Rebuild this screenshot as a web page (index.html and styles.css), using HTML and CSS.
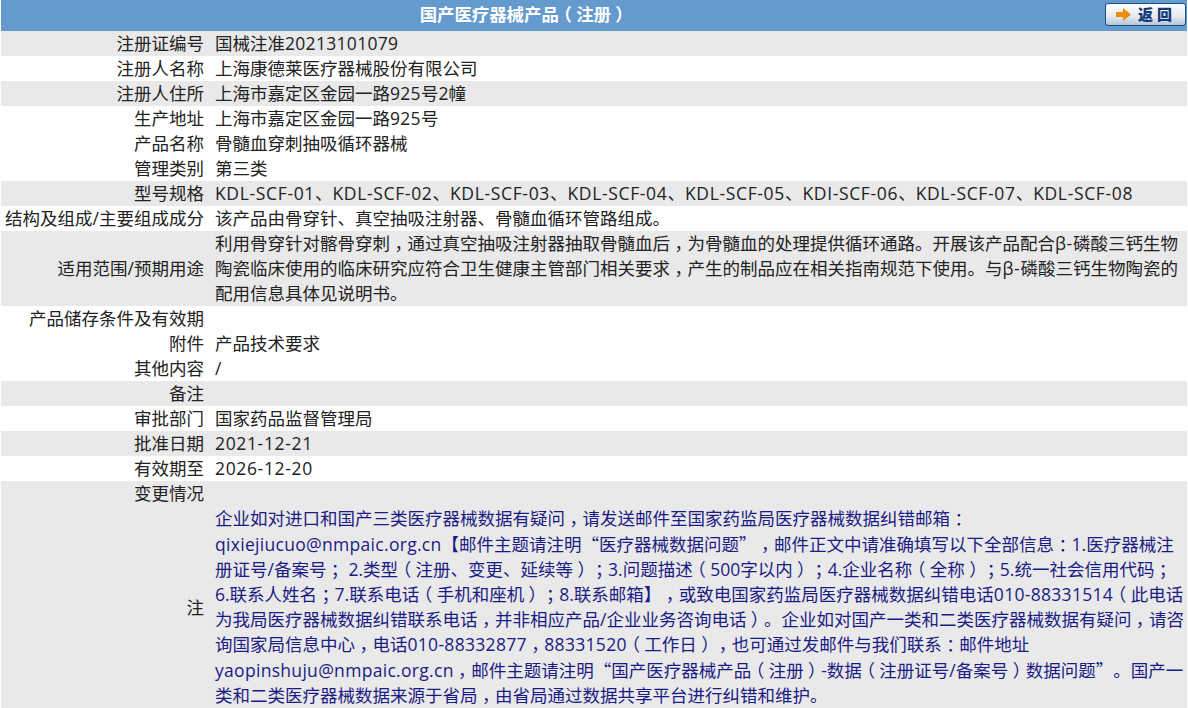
FILE: index.html
```html
<!DOCTYPE html>
<html lang="zh-CN">
<head>
<meta charset="utf-8">
<title>国产医疗器械产品（注册）</title>
<link rel="stylesheet" href="styles.css">
</head>
<body>
<main class="page">
  <header class="titlebar">
    <h1 class="title">国产医疗器械产品<span class="p">（</span>注册<span class="p">）</span></h1>
    <a class="back" href="#">
      <svg class="back-icon" width="15" height="13" viewBox="0 0 15 13"><path d="M0 4h7V0l8 6.5L7 13V9H0z" fill="#ee8a0c"/></svg>
      <span class="back-text">返回</span>
    </a>
  </header>
  <table class="detail">
    <tbody>
      <tr class="alt"><th>注册证编号</th><td>国械注准<span class="num">20213101079</span></td></tr>
      <tr><th>注册人名称</th><td>上海康德莱医疗器械股份有限公司</td></tr>
      <tr class="alt"><th>注册人住所</th><td>上海市嘉定区金园一路<span class="num">925</span>号2幢</td></tr>
      <tr><th>生产地址</th><td>上海市嘉定区金园一路<span class="num">925</span>号</td></tr>
      <tr><th>产品名称</th><td>骨髓血穿刺抽吸循环器械</td></tr>
      <tr><th>管理类别</th><td>第三类</td></tr>
      <tr class="alt"><th>型号规格</th><td><span class="code">KDL-SCF-01</span>、<span class="code">KDL-SCF-02</span>、<span class="code">KDL-SCF-03</span>、<span class="code">KDL-SCF-04</span>、<span class="code">KDL-SCF-05</span>、<span class="code">KDI-SCF-06</span>、<span class="code">KDL-SCF-07</span>、<span class="code">KDL-SCF-08</span></td></tr>
      <tr><th>结构及组成/主要组成成分</th><td>该产品由骨穿针、真空抽吸注射器、骨髓血循环管路组成。</td></tr>
      <tr class="alt"><th>适用范围/预期用途</th><td>利用骨穿针对髂骨穿刺<span class="p">，</span>通过真空抽吸注射器抽取骨髓血后<span class="p">，</span>为骨髓血的处理提供循环通路。开展该产品配合<span class="code">β-</span>磷酸三钙生物陶瓷临床使用的临床研究应符合卫生健康主管部门相关要求<span class="p">，</span>产生的制品应在相关指南规范下使用。与<span class="code">β-</span>磷酸三钙生物陶瓷的配用信息具体见说明书。</td></tr>
      <tr><th>产品储存条件及有效期</th><td></td></tr>
      <tr><th>附件</th><td>产品技术要求</td></tr>
      <tr><th>其他内容</th><td>/</td></tr>
      <tr class="alt"><th>备注</th><td></td></tr>
      <tr><th>审批部门</th><td>国家药品监督管理局</td></tr>
      <tr class="alt"><th>批准日期</th><td><span class="code">2021-12-21</span></td></tr>
      <tr><th>有效期至</th><td><span class="code">2026-12-20</span></td></tr>
      <tr class="alt"><th>变更情况</th><td></td></tr>
      <tr class="alt"><th>注</th><td class="note">企业如对进口和国产三类医疗器械数据有疑问<span class="p">，</span>请发送邮件至国家药监局医疗器械数据纠错邮箱<span class="p">：</span><br><span class="num">qixiejiucuo@nmpaic.org.cn</span>【邮件主题请注明<span class="cjk">“</span>医疗器械数据问题<span class="cjk">”</span><span class="p">，</span>邮件正文中请准确填写以下全部信息<span class="p">：</span>1.医疗器械注<br>册证号/备案号<span class="p">；</span> 2.类型<span class="p">（</span>注册、变更、延续等<span class="p">）</span><span class="p">；</span>3.问题描述<span class="p">（</span>500字以内<span class="p">）</span><span class="p">；</span>4.企业名称<span class="p">（</span>全称<span class="p">）</span><span class="p">；</span>5.统一社会信用代码<span class="p">；</span><br>6.联系人姓名<span class="p">；</span>7.联系电话<span class="p">（</span>手机和座机<span class="p">）</span><span class="p">；</span>8.联系邮箱】<span class="p">，</span>或致电国家药监局医疗器械数据纠错电话<span class="num">010-88331514</span><span class="p">（</span>此电话<br>为我局医疗器械数据纠错联系电话<span class="p">，</span>并非相应产品/企业业务咨询电话<span class="p">）</span>。企业如对国产一类和二类医疗器械数据有疑问<span class="p">，</span>请咨<br>询国家局信息中心<span class="p">，</span>电话<span class="num">010-88332877</span><span class="p">，</span><span class="num">88331520</span><span class="p">（</span>工作日<span class="p">）</span><span class="p">，</span>也可通过发邮件与我们联系<span class="p">：</span>邮件地址<br><span class="num">yaopinshuju@nmpaic.org.cn</span><span class="p">，</span>邮件主题请注明<span class="cjk">“</span>国产医疗器械产品<span class="p">（</span>注册<span class="p">）</span>-数据<span class="p">（</span>注册证号/备案号<span class="p">）</span>数据问题<span class="cjk">”</span>。国产一<br>类和二类医疗器械数据来源于省局<span class="p">，</span>由省局通过数据共享平台进行纠错和维护。</td></tr>
    </tbody>
  </table>
</main>
</body>
</html>
```
FILE: styles.css
```css
html, body {
  margin: 0;
  padding: 0;
  background: #fff;
}
body {
  font-family: "Open Sans", "Noto Sans CJK SC", sans-serif;
  font-size: 17.5px;
  line-height: 25px;
  color: #222;
  text-spacing-trim: space-all;
}
.page {
  margin-left: 1px;
  width: 1186px;
}
.titlebar {
  display: flex;
  align-items: center;
  height: 31px;
  box-sizing: border-box;
  padding: 0 0 3px;
  background: #659ace;
}
.title {
  flex: 1;
  margin: 0;
  padding-right: 58px;
  text-align: center;
  font-size: 17.4px;
  font-weight: bold;
  color: #fff;
}
.back {
  display: flex;
  align-items: center;
  gap: 7px;
  box-sizing: border-box;
  width: 81px;
  height: 23px;
  margin-right: 1px;
  padding-left: 10px;
  border: 1px solid #1a4f8a;
  border-radius: 3px;
  background: linear-gradient(#fdfdfd, #e6eaf1 60%, #b5c5d9);
  color: #123a7a;
  text-decoration: none;
}
.back-text {
  font-family: "Noto Sans CJK SC", sans-serif;
  font-size: 15px;
  line-height: 20px;
  font-weight: 900;
  letter-spacing: 4px;
}
.detail {
  width: 100%;
  table-layout: fixed;
  border-collapse: collapse;
}
.detail th,
.detail td {
  padding: 0;
  font-weight: normal;
}
.detail th {
  width: 203px;
  padding-right: 6px;
  text-align: right;
  vertical-align: middle;
  white-space: nowrap;
}
.detail td {
  padding-left: 5px;
  text-align: left;
  height: 25px;
}
.alt {
  background: #e9e9e9;
}
.note {
  color: #1b1b85;
}
.num {
  letter-spacing: 0.3px;
}
.code {
  letter-spacing: 0.65px;
}
.cjk {
  font-family: "Noto Sans CJK SC", sans-serif;
}
/* full-width punctuation sits centred in its em box in the reference:
   trim it to half width, then pad it back to one em on both sides */
.p {
  padding: 0 0.25em;
  font-feature-settings: "halt";
}
```
